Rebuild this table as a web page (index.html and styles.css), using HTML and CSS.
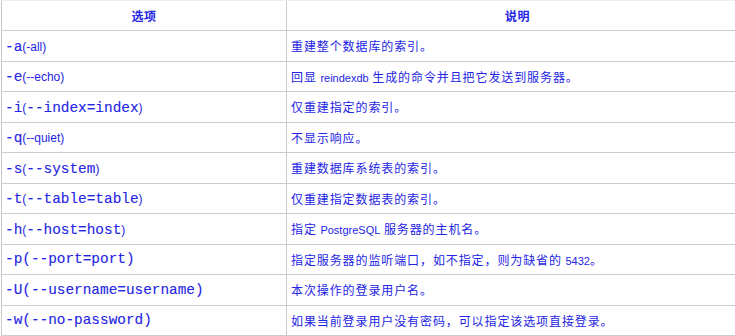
FILE: index.html
```html
<!DOCTYPE html>
<html lang="zh-CN">
<head>
<meta charset="utf-8">
<link rel="stylesheet" href="styles.css">
</head>
<body>
<div class="wrap">
  <div class="grid">
    <div class="cell head"><span>选项</span></div>
    <div class="cell head"><span>说明</span></div>

    <div class="cell opt"><span><span class="m">-a</span><span class="s">(-all)</span></span></div>
    <div class="cell desc"><span>重建整个数据库的索引。</span></div>

    <div class="cell opt"><span><span class="m">-e</span><span class="s">(--echo)</span></span></div>
    <div class="cell desc"><span>回显 <span class="en">reindexdb</span> 生成的命令并且把它发送到服务器。</span></div>

    <div class="cell opt"><span><span class="m">-i</span><span class="s">(</span><span class="m">--index=index</span><span class="s">)</span></span></div>
    <div class="cell desc"><span>仅重建指定的索引。</span></div>

    <div class="cell opt"><span><span class="m">-q</span><span class="s">(--quiet)</span></span></div>
    <div class="cell desc"><span>不显示响应。</span></div>

    <div class="cell opt"><span><span class="m">-s</span><span class="s">(</span><span class="m">--system</span><span class="s">)</span></span></div>
    <div class="cell desc"><span>重建数据库系统表的索引。</span></div>

    <div class="cell opt"><span><span class="m">-t</span><span class="s">(</span><span class="m">--table=table</span><span class="s">)</span></span></div>
    <div class="cell desc"><span>仅重建指定数据表的索引。</span></div>

    <div class="cell opt"><span><span class="m">-h</span><span class="s">(</span><span class="m">--host=host</span><span class="s">)</span></span></div>
    <div class="cell desc"><span>指定 <span class="en">PostgreSQL</span> 服务器的主机名。</span></div>

    <div class="cell opt"><span class="m">-p(--port=port)</span></div>
    <div class="cell desc"><span>指定服务器的监听端口，如不指定，则为缺省的 <span class="en">5432</span>。</span></div>

    <div class="cell opt"><span class="m">-U(--username=username)</span></div>
    <div class="cell desc"><span>本次操作的登录用户名。</span></div>

    <div class="cell opt"><span class="m">-w(--no-password)</span></div>
    <div class="cell desc"><span>如果当前登录用户没有密码，可以指定该选项直接登录。</span></div>
  </div>
</div>
</body>
</html>
```
FILE: styles.css
```css
html, body {
  margin: 0;
  padding: 0;
  background: #ffffff;
}
body {
  overflow: hidden;
  width: 735px;
  height: 336px;
}
.wrap {
  padding-left: 1px;
}
.grid {
  display: grid;
  grid-template-columns: 285px 462px;
  grid-template-rows: 30px repeat(10, 30.5px);
  width: 748px;
  border-left: 1px solid #c8c8c8;
  border-top: 1px solid #eeeeee;
  box-sizing: border-box;
  color: #2424e4;
  font-family: "Liberation Sans", "Noto Sans CJK SC", sans-serif;
}
.cell {
  border-bottom: 1px solid #cccccc;
  border-right: 1px solid #cccccc;
  display: flex;
  align-items: center;
  box-sizing: border-box;
  white-space: nowrap;
  overflow: hidden;
}
.head {
  justify-content: center;
  font-family: "Noto Sans CJK SC", sans-serif;
  font-weight: bold;
  font-size: 12px;
  letter-spacing: 0.5px;
}
.opt {
  padding-left: 3px;
}
.desc {
  padding-left: 4px;
  font-family: "Noto Sans CJK SC", sans-serif;
  font-size: 12px;
  letter-spacing: 0.9px;
}
.en {
  font-family: "Liberation Sans", sans-serif;
  font-size: 11px;
  letter-spacing: 0;
}
.m {
  font-family: "Liberation Mono", monospace;
  font-size: 14.4px;
  -webkit-text-stroke: 0.12px currentColor;
}
.s {
  font-family: "Liberation Sans", sans-serif;
  font-size: 12px;
}
```
